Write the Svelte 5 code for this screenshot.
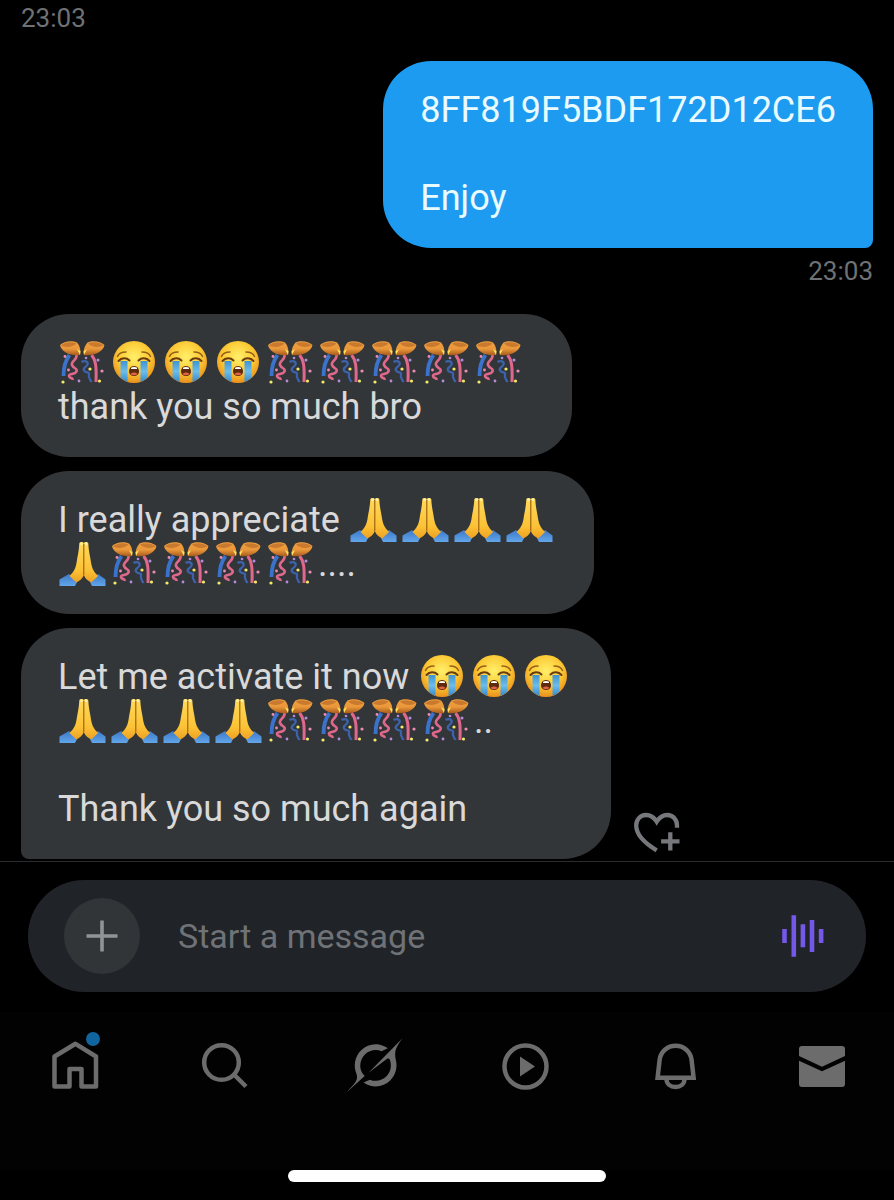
<script>
    let draft = $state('');

    const emoji = {
        '🎊': {id: 'confetti', label: 'confetti ball'},
        '😭': {id: 'sob', label: 'loudly crying face'},
        '🙏': {id: 'pray', label: 'folded hands'}
    };

    const received = [
        {lines: ['🎊😭😭😭🎊🎊🎊🎊🎊 ', 'thank you so much bro']},
        {lines: ['I really appreciate 🙏🙏🙏🙏', '🙏🎊🎊🎊🎊....']},
        {lines: ['Let me activate it now 😭😭😭', '🙏🙏🙏🙏🎊🎊🎊🎊..', '', 'Thank you so much again'], last: true}
    ];

    const tabs = ['Home', 'Search', 'Grok', 'Video', 'Notifications', 'Messages'];

    // splits a line into runs of text and single emoji
    const parts = (line) => line.split(/(🎊|😭|🙏)/u).filter((p) => p !== '');
</script>

<svg class="defs" width="0" height="0" aria-hidden="true">
    <defs>
        <radialGradient id="face" cx="50%" cy="38%" r="62%">
            <stop offset="0" stop-color="#fff06a" />
            <stop offset=".6" stop-color="#fcc934" />
            <stop offset="1" stop-color="#e98f1c" />
        </radialGradient>
        <linearGradient id="tear" x1="0" y1="0" x2="0" y2="1">
            <stop offset="0" stop-color="#3f93cf" />
            <stop offset=".5" stop-color="#6dbdeb" />
            <stop offset="1" stop-color="#3589c9" />
        </linearGradient>
        <linearGradient id="shell" x1="0" y1="0" x2="0" y2="1">
            <stop offset="0" stop-color="#f0a040" />
            <stop offset=".55" stop-color="#e9973a" />
            <stop offset="1" stop-color="#a85a1c" />
        </linearGradient>
        <linearGradient id="skin" x1="0" y1="0" x2="0" y2="1">
            <stop offset="0" stop-color="#ffd95a" />
            <stop offset=".7" stop-color="#fcc235" />
            <stop offset="1" stop-color="#eda022" />
        </linearGradient>
        <linearGradient id="sleeve" x1="0" y1="0" x2="0" y2="1">
            <stop offset="0" stop-color="#3c78c8" />
            <stop offset="1" stop-color="#62a6ea" />
        </linearGradient>
        <symbol id="sob" viewBox="0 0 52 44">
            <circle cx="24" cy="21" r="21" fill="url(#face)" />
            <path d="M10.500 20h7v21a21 21 0 0 1-7-4.500z" fill="url(#tear)" />
            <path d="M30.500 20h7v16.500a21 21 0 0 1-7 4.500z" fill="url(#tear)" />
            <path d="M8.500 20c3-3.500 8-3.500 11-.5M28.500 19.500c3-3 8-3 11 .5" fill="none" stroke="#6b3c10" stroke-width="2" stroke-linecap="round" />
            <path d="M7.500 15.500c1-2.500 4-4.500 8.500-4.500M40.500 15.500c-1-2.500-4-4.500-8.500-4.500" fill="none" stroke="#96601a" stroke-width="1.500" stroke-linecap="round" />
            <path d="M24 25c3.500 0 5 3 5 5.500s-2 4.500-5 4.500-5-2-5-4.500 1.500-5.500 5-5.500z" fill="#5c2a0c" />
            <path d="M21 26.700c1.500-1 4.500-1 6 0v1.300h-6z" fill="#fff" />
            <path d="M20.500 33c1.500-2 5.500-2 7 0-1.500 1.700-5.500 1.700-7 0z" fill="#e0604a" />
        </symbol>
        <symbol id="confetti" viewBox="0 0 52 44">
            <path d="M11.500 14C7 20 5.500 27 5.500 35" fill="none" stroke="#3a72cc" stroke-width="3.800" />
            <path d="M18.500 13c1.500 6-6 7-4.500 11s6 3 4.500 6.500-8 1.500-7.500 4.500 4 1 3.500 4" fill="none" stroke="#e0688c" stroke-width="2.600" />
            <path d="M23.500 21c3-2 7-.5 6 2.500s-5 3-3.500 6 6 .5 5 4 1 4.500 2.500 7.500" fill="none" stroke="#3d62ac" stroke-width="2.300" />
            <path d="M33.500 14c4.500 5 5 12 4.500 27" fill="none" stroke="#e0688c" stroke-width="3" />
            <path d="M2 4C6 0 14-1 19 1.500c3 3.500 4 8 3 12.500C13 15.500 3.500 11 2 4z" fill="url(#shell)" />
            <path d="M46.500 4c-4-4-12-5-17-2.500-3 3.500-4.500 8-3.500 12.500 9 1.500 19-3 20.500-10z" fill="url(#shell)" />
            <path d="M3 4.500c4-3.500 11-4 15.500-2C15 6 8 7 3 4.500zM45.500 4.500c-4-3.500-11-4-15.500-2 3.500 3.500 10.500 4.500 15.500 2z" fill="#c97a2e" />
            <path d="M19 8l3 6 .5-4zM29 8l-3 6-.5-4z" fill="#ffe45e" />
            <g fill="#f3e96b">
                <circle cx="5" cy="41" r="1.600" /><circle cx="32" cy="28" r="1.600" /><circle cx="41.500" cy="40" r="1.600" />
            </g>
            <g fill="#ee8bb4">
                <circle cx="7" cy="15.500" r="1.400" /><circle cx="44" cy="30" r="1.600" /><circle cx="10.500" cy="29" r="1.400" />
            </g>
            <g fill="#b48be0">
                <circle cx="40" cy="19" r="1.500" /><circle cx="21" cy="40" r="1.400" /><circle cx="28" cy="17" r="1.300" />
            </g>
        </symbol>
        <symbol id="pray" viewBox="0 0 52 44">
            <path d="M1.500 44v-6.500L11 32l8 8-2 4zM47.500 44v-6.500L40 32l-8 8 2 4z" fill="url(#sleeve)" />
            <path d="M21.300 1.500c0-2 4.500-2 4.500 0V33c-1.500 4-4.500 6-7.500 7.500L11.500 34c4-4 6-7 7-13 1-7 2.500-12 2.800-19.500z" fill="url(#skin)" />
            <path d="M30.300 1.500c0-2-4.500-2-4.500 0V33c1.500 4 4.500 6 7.500 7.500l6.800-6.500c-4-4-6-7-7-13-1-7-2.500-12-2.800-19.500z" fill="url(#skin)" />
            <path d="M25.800 2v31" stroke="#a5670f" stroke-width="1.200" />
            <path d="M22.500.5h2.200v2.500h-2.200zM27 .5h2.200v2.500H27z" fill="#ffefac" />
        </symbol>
    </defs>
</svg>

{#snippet bubble(lines, kind)}
    <div class="bubble {kind}">
        {#each lines as line}
            <p>{#each parts(line) as part}{#if emoji[part]}<svg class="emoji" role="img" aria-label={emoji[part].label}><use href="#{emoji[part].id}" /></svg>{:else}{part}{/if}{/each}</p>
        {/each}
    </div>
{/snippet}

<div class="app">
    <main class="thread">
        <time class="stamp">23:03</time>
        <div class="sent">
            {@render bubble(['8FF819F5BDF172D12CE6', '', 'Enjoy'], 'mine')}
            <time class="stamp">23:03</time>
        </div>
        <div class="received">
            {#each received as message}
                <div class="row">
                    {@render bubble(message.lines, message.last ? 'theirs last' : 'theirs')}
                    {#if message.last}
                        <button class="react" aria-label="Add reaction">
                            <svg width="48" height="42" viewBox="0 0 48 42" fill="none" stroke="currentColor" stroke-width="4.300">
                                <path d="M44 15.700V13.500C44 7.500 39.800 3 34.300 3 29.500 3 26 6 23.700 9.700 21.500 6 18 3 13 3 7 3 3.200 7.700 3.200 13.500 3.200 24 14 32.500 23.700 38.300" />
                                <path d="M37.300 20.200v18.400M28.100 29.400h18.400" />
                            </svg>
                        </button>
                    {/if}
                </div>
            {/each}
        </div>
    </main>

    <form class="composer" onsubmit={(event) => event.preventDefault()}>
        <div class="pill">
            <button type="button" class="add" aria-label="Add attachment">
                <svg width="32" height="32" viewBox="0 0 32 32" stroke="currentColor" stroke-width="3.600">
                    <path d="M16 .5v31M.5 16h31" />
                </svg>
            </button>
            <input type="text" placeholder="Start a message" aria-label="Start a message" bind:value={draft}>
            <button type="button" class="voice" aria-label="Record voice message">
                <svg width="42" height="42" viewBox="0 0 42 42" fill="currentColor">
                    <path d="M.2 14h4.600v14H.2zM9.500.3h4.600v41.400H9.500zM18.600 9.300h4.600v23h-4.600zM27.700 5h4.600v32h-4.600zM36.800 14h4.600v14h-4.600z" />
                </svg>
            </button>
        </div>
    </form>

    <nav class="tabs">
        {#each tabs as tab}
            <a href="#{tab.toLowerCase()}" aria-label={tab}>
                <svg class="icon" viewBox="0 0 48 48" fill="none" stroke="currentColor" stroke-width="4.500">
                    {#if tab === 'Home'}
                        <path d="M3.500 44.500v-30L24.500 1.800 45 14.500v30H30.500V27h-12v17.500z" stroke-linejoin="round" />
                    {:else if tab === 'Search'}
                        <circle cx="20.500" cy="20.500" r="17.300" />
                        <path d="M32.500 32l12.500 12.500" />
                    {:else if tab === 'Grok'}
                        <g transform="translate(-3 -4) scale(1.690)" fill="currentColor" stroke="none">
                            <path d="M12.745 20.540l10.970-8.190c.539-.4 1.307-.244 1.564.38 1.349 3.288.746 7.241-1.938 9.955-2.683 2.714-6.417 3.310-9.830 1.954l-3.728 1.745c5.347 3.697 11.840 2.782 15.898-1.324 3.219-3.255 4.216-7.692 3.284-11.693l.008.009c-1.351-5.878.332-8.227 3.782-13.031L33 0l-4.540 4.590v-.014L12.743 20.544" />
                            <path d="M10.480 22.531c-3.837-3.707-3.175-9.446.1-12.755 2.420-2.449 6.388-3.448 9.852-1.979l3.720-1.737c-.67-.49-1.530-1.017-2.515-1.387-4.455-1.854-9.789-.931-13.410 2.728-3.483 3.523-4.579 8.940-2.697 13.561 1.405 3.454-.899 5.898-3.220 8.364C1.490 30.200.666 31.074 0 32l10.478-9.466" />
                        </g>
                    {:else if tab === 'Video'}
                        <circle cx="25.500" cy="24.500" r="21" />
                        <path d="M20 14.500v20l15-10z" fill="currentColor" stroke="none" />
                    {:else if tab === 'Notifications'}
                        <path d="M8.600 35.700 10.600 18C11.500 9.500 18.500 3.800 26.600 3.800S41.700 9.500 42.600 18l2 17.700z" />
                        <path d="M17.500 37c0 5 4 8 9 8s9-3 9-8" />
                    {:else}
                        <path d="M0 7a3 3 0 0 1 3-3h40a3 3 0 0 1 3 3v7L23 24.700 0 14zM0 18.700l23 10.600 23-10.600V42a3 3 0 0 1-3 3H3a3 3 0 0 1-3-3z" fill="currentColor" stroke="none" />
                    {/if}
                </svg>
                {#if tab === 'Home'}<span class="dot"></span>{/if}
            </a>
        {/each}
    </nav>
    <div class="indicator"></div>
</div>

<style>
    :global(body) {margin: 0; background: #000;}
    .defs {position: absolute;}
    .app {
        display: flex;
        flex-direction: column;
        min-height: 100vh;
        background: #000;
        color: #d9d9d9;
        font-family: Roboto, "Liberation Sans", sans-serif;
        font-size: 36px;
        line-height: 44px;
    }
    button {padding: 0; border: 0; background: none; color: inherit; display: flex;}
    svg {display: block; overflow: visible;}
    p {margin: 0; min-height: 44px; white-space: break-spaces;}

    .thread {display: flex; flex-direction: column; padding: 2px 21px;}
    .stamp {font-size: 26px; line-height: 32px; color: #6e7275;}
    .sent {display: flex; flex-direction: column; align-items: flex-end; gap: 7px; margin: 27px 0;}
    .received {display: flex; flex-direction: column; gap: 14px;}
    .row {display: flex; align-items: flex-end; gap: 22px;}
    .bubble {padding: 27px 37px 28px; border-radius: 48px;}
    .mine {background: #1d9bf0; color: #e9fbff; border-bottom-right-radius: 8px;}
    .theirs {background: #333639;}
    .last {border-bottom-left-radius: 8px;}
    .emoji {display: inline-block; width: 52px; height: 44px; vertical-align: top;}
    .react {color: #76787b; margin-bottom: 5px;}

    .composer {border-top: 1px solid #2b2c2e; padding: 18px 28px 20px;}
    .pill {
        display: flex;
        align-items: center;
        padding: 18px 42px 18px 36px;
        border-radius: 56px;
        background: #202327;
    }
    .add {
        width: 76px;
        height: 76px;
        flex: none;
        align-items: center;
        justify-content: center;
        border-radius: 50%;
        background: #313538;
        color: #929396;
    }
    input {
        flex: 1;
        min-width: 0;
        padding: 0 38px;
        border: 0;
        outline: 0;
        background: none;
        color: inherit;
        font: inherit;
        font-size: 34px;
    }
    input::placeholder {color: #6f7377; opacity: 1;}
    .voice {color: #7458e8;}

    .tabs {
        display: flex;
        justify-content: space-between;
        padding: 30px 47px 80px 51px;
        background: #020202;
        color: #6c6c6c;
    }
    .tabs a {position: relative; color: inherit;}
    .icon {width: 48px; height: 48px;}
    .dot {
        position: absolute;
        top: -10px;
        right: -1px;
        width: 14px;
        height: 14px;
        border-radius: 50%;
        background: #11659f;
    }
    .indicator {
        width: 36%;
        max-width: 318px;
        height: 12px;
        margin: 0 auto 18px;
        border-radius: 6px;
        background: #fff;
    }
</style>
